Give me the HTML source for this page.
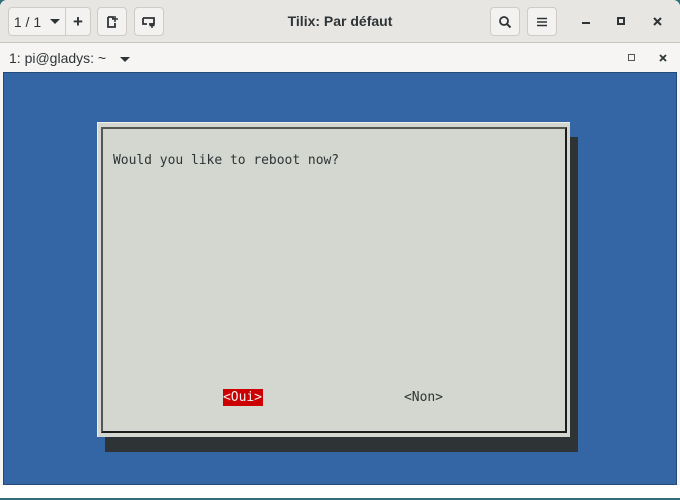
<!DOCTYPE html>
<html><head><meta charset="utf-8"><style>
*{margin:0;padding:0;box-sizing:border-box}
body{width:680px;height:500px;background:#2f6f7a;position:relative;overflow:hidden;font-family:"Liberation Sans",sans-serif}
.win{position:absolute;left:0;top:0;width:680px;height:498px;background:#f6f5f4;border-radius:7px 7px 0 0;overflow:hidden}
.hdr{position:absolute;left:0;top:0;width:680px;height:43px;background:#e8e6e3;border-bottom:1px solid #c8c5c0}
.btn{position:absolute;top:7px;height:29px;background:#f3f2f0;border:1px solid #cfcbc6;border-radius:4px;font-size:14px;color:#2e3436;display:flex;align-items:center;justify-content:center}
.title{position:absolute;left:0;width:680px;top:13px;text-align:center;font-weight:bold;font-size:14px;color:#2e3436}
.tab{position:absolute;top:44px;left:0;width:680px;height:28px;background:#f6f5f4}
.term{position:absolute;left:3px;top:72px;width:674px;height:413px;background:#3465a4;border:1px solid #244a7a}
.bot{position:absolute;left:0;top:485px;width:680px;height:13px;background:#fff}
.mono{font-family:"DejaVu Sans Mono","Liberation Mono",monospace;font-size:13px;color:#2e3436;position:absolute;letter-spacing:-0.03px}
.arr{display:inline-block;width:0;height:0;border-left:5px solid transparent;border-right:5px solid transparent;border-top:5px solid #2e3436;vertical-align:middle}
</style></head><body>
<div class="win">
<div class="hdr">
 <div class="btn" style="left:8px;width:58px;border-radius:4px 0 0 4px">1 / 1 <span class="arr" style="margin-left:9px"></span></div>
 <div class="btn" style="left:65px;width:26px;border-radius:0 4px 4px 0;font-weight:bold;font-size:17px">+</div>
 <div class="btn" style="left:97px;width:30px"><svg width="14" height="14" viewBox="0 0 14 14"><path d="M3 2h5v2M3 2v10h7V8" fill="none" stroke="#2e3436" stroke-width="1.8"/><path d="M10 1v6M7 4h6" stroke="#2e3436" stroke-width="1.5"/></svg></div>
 <div class="btn" style="left:134px;width:30px"><svg width="16" height="14" viewBox="0 0 16 14"><path d="M2 3h11v6H8M2 3v6h4" fill="none" stroke="#2e3436" stroke-width="1.8"/><path d="M11 8v5M8.5 10.5h5" stroke="#2e3436" stroke-width="1.5"/></svg></div>
 <div class="title">Tilix: Par défaut</div>
 <div class="btn" style="left:490px;width:30px"><svg width="14" height="14" viewBox="0 0 14 14"><circle cx="6" cy="6" r="4" fill="none" stroke="#2e3436" stroke-width="1.8"/><path d="M9 9l3.5 3.5" stroke="#2e3436" stroke-width="2"/></svg></div>
 <div class="btn" style="left:527px;width:30px"><svg width="12" height="12" viewBox="0 0 12 12"><path d="M1 2.5h10M1 6h10M1 9.5h10" stroke="#2e3436" stroke-width="1.6"/></svg></div>
 <div style="position:absolute;left:582px;top:22px;width:8px;height:2px;background:#2e3436"></div>
 <div style="position:absolute;left:617px;top:17px;width:8px;height:8px;border:2px solid #2e3436"></div>
 <svg style="position:absolute;left:653px;top:17px" width="9" height="9"><path d="M1 1l7 7M8 1l-7 7" stroke="#2e3436" stroke-width="2"/></svg>
</div>
<div class="tab">
 <div style="position:absolute;left:9px;top:6px;font-size:14px;color:#2e3436">1: pi@gladys: ~ <span class="arr" style="margin-left:10px"></span></div>
 <div style="position:absolute;left:628px;top:10px;width:7px;height:7px;border:1px solid #555"></div>
 <svg style="position:absolute;left:659px;top:10px" width="8" height="8"><path d="M1 1l6 6M7 1l-6 6" stroke="#2e3436" stroke-width="1.8"/></svg>
</div>
<div class="term"></div>
<div style="position:absolute;left:105px;top:137px;width:473px;height:315px;background:#2e3436"></div>
<div style="position:absolute;left:97px;top:122px;width:473px;height:315px;background:#d3d7cf;border-top:1px solid #eeeeec;border-left:1px solid #eeeeec"></div>
<div style="position:absolute;left:101px;top:127px;width:466px;height:306px;border-top:2px solid #555753;border-left:2px solid #555753;border-right:2px solid #1c1c1c;border-bottom:2px solid #1c1c1c"></div>
<div class="mono" style="left:113px;top:153px">Would you like to reboot now?</div>
<div class="mono" style="left:223px;top:389px;background:#cc0000;color:#f0f0f0;height:17px;line-height:17px;width:40px">&lt;Oui&gt;</div>
<div class="mono" style="left:404px;top:389px;line-height:17px">&lt;Non&gt;</div>
<div class="bot"></div>
</div>
</body></html>
